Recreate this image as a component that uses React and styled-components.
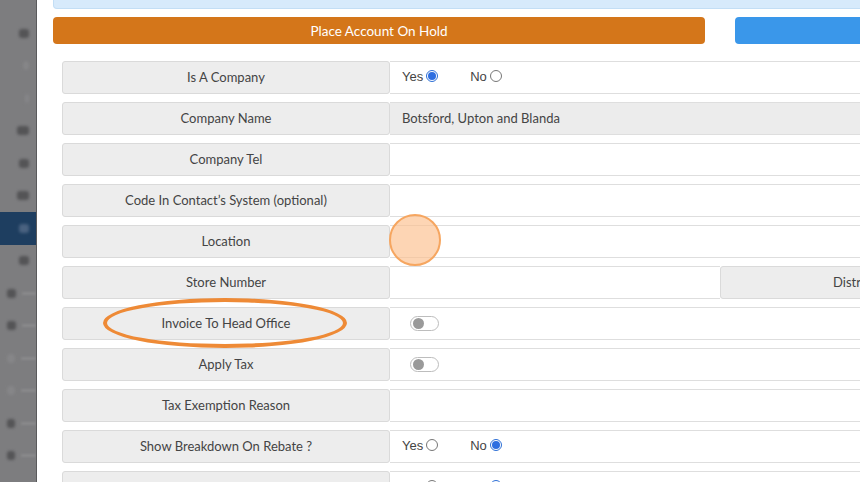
import styled, { createGlobalStyle } from 'styled-components';

const GlobalStyle = createGlobalStyle`
  html, body {
    margin: 0;
    padding: 0;
    width: 860px;
    height: 482px;
    overflow: hidden;
    background: #ffffff;
    font-family: Lato, "Open Sans", sans-serif;
  }
`;

const Page = styled.div`
  position: relative;
  display: flex;
  align-items: flex-start;
  width: 860px;
  height: 482px;
  overflow: hidden;
`;

const Sidebar = styled.div`
  flex: 0 0 36px;
  align-self: stretch;
  background: #7d7d7f;
  border-right: 1px solid #5a5a5c;
  display: flex;
  flex-direction: column;
  padding-top: 17px;
  overflow: hidden;
`;

const NavItem = styled.div`
  flex: 0 0 32.5px;
  box-sizing: border-box;
  display: flex;
  align-items: center;
  justify-content: ${p => (p.$sub ? 'flex-start' : 'flex-end')};
  gap: 6px;
  padding: ${p => (p.$sub ? '0 0 0 7px' : '0 7px 0 0')};
  background: ${p => (p.$active ? '#1e3e60' : 'transparent')};
`;

const NavBlob = styled.span`
  width: ${p => p.$w || 10}px;
  height: 9px;
  border-radius: 3px;
  background: ${p => (p.$active ? '#4a6280' : p.$light ? '#868688' : '#545456')};
  filter: blur(1.5px);
`;

const NavText = styled.span`
  width: 20px;
  height: 3px;
  background: #8a8a8c;
  filter: blur(1px);
`;

const Main = styled.div`
  flex: 0 0 900px;
  padding-left: 16px;
  display: flex;
  flex-direction: column;
  & > * {
    flex-shrink: 0;
  }
`;

const InfoBar = styled.div`
  height: 8px;
  background: #d7eafb;
  border: 1px solid #c3def5;
  border-top: none;
  border-radius: 0 0 4px 4px;
`;

const ButtonRow = styled.div`
  display: flex;
  gap: 30px;
  margin-top: 8px;
`;

const ActionButton = styled.div`
  flex: 0 0 ${p => p.$w}px;
  height: 27px;
  border-radius: 4px;
  background: ${p => p.$bg};
  color: #ffffff;
  font-size: 13.5px;
  display: flex;
  align-items: center;
  justify-content: center;
`;

const Form = styled.div`
  margin-top: 17px;
  padding-left: 9px;
  display: flex;
  flex-direction: column;
  gap: 8px;
`;

const Row = styled.div`
  display: flex;
  flex-shrink: 0;
  height: 33px;
`;

const Label = styled.div`
  flex: 0 0 ${p => p.$w || 328}px;
  box-sizing: border-box;
  background: #ededed;
  border: 1px solid #dadada;
  border-radius: 3px;
  color: #444;
  font-size: 13px;
  display: flex;
  align-items: center;
  justify-content: center;
  padding-bottom: 2px;
  white-space: nowrap;
`;

const Value = styled.div`
  flex: ${p => (p.$w ? `0 0 ${p.$w}px` : '1 1 auto')};
  box-sizing: border-box;
  background: ${p => (p.$readonly ? '#ececec' : '#ffffff')};
  border-top: 1px solid #dedede;
  border-bottom: 1px solid #dedede;
  color: #444;
  font-size: 13px;
  display: flex;
  align-items: center;
  padding-left: 12px;
  padding-bottom: 2px;
  gap: 32px;
`;

const RadioLabel = styled.label`
  display: flex;
  align-items: center;
  gap: 3px;
  font-family: "Liberation Sans", Arial, sans-serif;
  font-size: 13px;
  color: #444;
`;

const Radio = styled.span`
  box-sizing: border-box;
  width: 12px;
  height: 12px;
  border-radius: 50%;
  border: 1px solid ${p => (p.$checked ? '#2d6fd6' : '#777')};
  background: #fff;
  display: inline-flex;
  align-items: center;
  justify-content: center;
  margin-top: -2px;
  &::after {
    content: '';
    width: 8px;
    height: 8px;
    border-radius: 50%;
    background: ${p => (p.$checked ? '#2e6ee0' : 'transparent')};
  }
`;

const Toggle = styled.span`
  box-sizing: border-box;
  width: 29px;
  height: 15px;
  margin-left: 8px;
  margin-top: 2px;
  border-radius: 8px;
  border: 1px solid #bdbdbd;
  background: #fff;
  display: inline-flex;
  align-items: center;
  padding-left: 2px;
  &::after {
    content: '';
    width: 11px;
    height: 11px;
    border-radius: 50%;
    background: #9a9a9a;
  }
`;

const Ellipse = styled.div`
  position: absolute;
  left: 103px;
  top: 298px;
  width: 244px;
  height: 50px;
  box-sizing: border-box;
  border: 4px solid #ee8a36;
  border-radius: 50%;
  pointer-events: none;
`;

const Cursor = styled.div`
  position: absolute;
  left: 389px;
  top: 214px;
  width: 52px;
  height: 52px;
  box-sizing: border-box;
  border-radius: 50%;
  background: rgba(252, 190, 140, 0.65);
  border: 2px solid #f6a660;
  pointer-events: none;
`;

const YesNo = ({ yes }) => (
  <>
    <RadioLabel>Yes <Radio $checked={yes} /></RadioLabel>
    <RadioLabel>No <Radio $checked={!yes} /></RadioLabel>
  </>
);

const nav = [
  { w: 10 }, { w: 6, light: true }, { w: 4, light: true }, { w: 12 }, { w: 10 },
  { w: 12 }, { w: 10, active: true }, { w: 10 }, { sub: true, w: 12 }, { sub: true, w: 12 },
  { sub: true, w: 10, light: true }, { sub: true, w: 10, light: true }, { sub: true, w: 10 },
  { sub: true, w: 10 },
];

export default function App() {
  return (
    <>
      <GlobalStyle />
      <Page>
        <Sidebar>
          {nav.map((n, i) => (
            <NavItem key={i} $active={n.active} $sub={n.sub}>
              <NavBlob $w={n.w} $light={n.light} $active={n.active} />
              {n.sub && <NavText />}
            </NavItem>
          ))}
        </Sidebar>
        <Main>
          <InfoBar />
          <ButtonRow>
            <ActionButton $w={652} $bg="#d4761a">Place Account On Hold</ActionButton>
            <ActionButton $w={300} $bg="#3a97ea" />
          </ButtonRow>
          <Form>
            <Row>
              <Label>Is A Company</Label>
              <Value><YesNo yes /></Value>
            </Row>
            <Row>
              <Label>Company Name</Label>
              <Value $readonly>Botsford, Upton and Blanda</Value>
            </Row>
            <Row>
              <Label>Company Tel</Label>
              <Value />
            </Row>
            <Row>
              <Label>Code In Contact’s System (optional)</Label>
              <Value />
            </Row>
            <Row>
              <Label>Location</Label>
              <Value />
            </Row>
            <Row>
              <Label>Store Number</Label>
              <Value $w={330} />
              <Label $w={268}>District</Label>
              <Value />
            </Row>
            <Row>
              <Label>Invoice To Head Office</Label>
              <Value><Toggle /></Value>
            </Row>
            <Row>
              <Label>Apply Tax</Label>
              <Value><Toggle /></Value>
            </Row>
            <Row>
              <Label>Tax Exemption Reason</Label>
              <Value />
            </Row>
            <Row>
              <Label>Show Breakdown On Rebate ?</Label>
              <Value><YesNo yes={false} /></Value>
            </Row>
            <Row>
              <Label>Show Rebate Breakdown On Invoice ?</Label>
              <Value><YesNo yes={false} /></Value>
            </Row>
          </Form>
        </Main>
        <Ellipse />
        <Cursor />
      </Page>
    </>
  );
}
